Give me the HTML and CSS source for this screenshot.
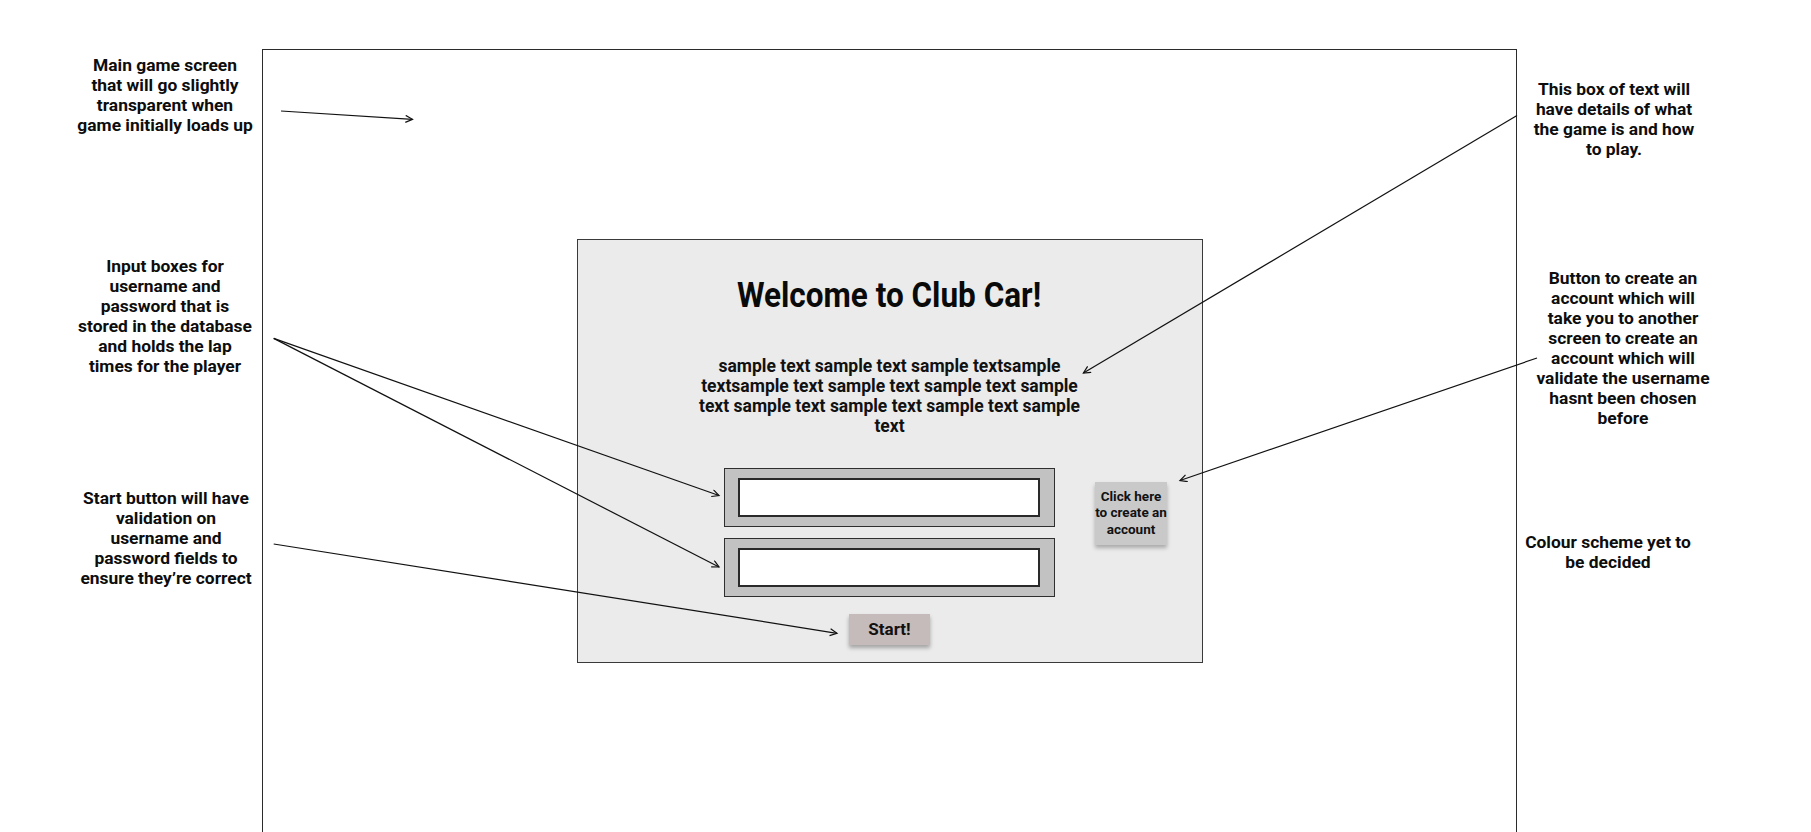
FILE: index.html
```html
<!DOCTYPE html>
<html lang="en">
<head>
<meta charset="utf-8">
<title>Club Car wireframe</title>
<link rel="stylesheet" href="styles.css">
</head>
<body>
<div class="page">
  <aside class="notes notes-left">
    <p class="note note-l1">Main game screen<br>that will go slightly<br>transparent when<br>game initially loads up</p>
    <p class="note note-l2">Input boxes for<br>username and<br>password that is<br>stored in the database<br>and holds the lap<br>times for the player</p>
    <p class="note note-l3">Start button will have<br>validation on<br>username and<br>password fields to<br>ensure they’re correct</p>
  </aside>

  <main class="frame">
    <section class="dialog">
      <h1 class="title">Welcome to Club Car!</h1>
      <p class="intro">sample text sample text sample textsample textsample text sample text sample text sample text sample text sample text sample text sample text</p>
      <div class="form-row">
        <div class="fields">
          <div class="field"><div class="field-input"></div></div>
          <div class="field"><div class="field-input"></div></div>
          <button class="start-btn" type="button">Start!</button>
        </div>
        <button class="create-btn" type="button">Click here<br>to create an<br>account</button>
      </div>
    </section>
  </main>

  <aside class="notes notes-right">
    <p class="note note-r1">This box of text will<br>have details of what<br>the game is and how<br>to play.</p>
    <p class="note note-r2">Button to create an<br>account which will<br>take you to another<br>screen to create an<br>account which will<br>validate the username<br>hasnt been chosen<br>before</p>
    <p class="note note-r3">Colour scheme yet to<br>be decided</p>
  </aside>

  <svg class="arrows" width="1811" height="832" viewBox="0 0 1811 832">
    <defs>
      <marker id="head" markerUnits="userSpaceOnUse" markerWidth="12" markerHeight="12" refX="7.5" refY="4" orient="auto">
        <path d="M0.5,0.5 L7.5,4 L0.5,7.5" fill="none" stroke="#111" stroke-width="1.2"/>
      </marker>
    </defs>
    <g fill="none" stroke="#111" stroke-width="1.2" marker-end="url(#head)">
      <path d="M281 111 L412.5 119.3"/>
      <path d="M1517 115.5 L1083.4 373"/>
      <path d="M1537 358 L1180 480.5"/>
      <path d="M273.7 338.4 L719 495.5"/>
      <path d="M273.7 338.4 L719 567"/>
      <path d="M273.7 544 L837 633.3"/>
    </g>
  </svg>
</div>
</body>
</html>
```

FILE: styles.css
```css
* {
  box-sizing: border-box;
}

html,
body {
  margin: 0;
  padding: 0;
  background: #ffffff;
}

body {
  width: 1811px;
  height: 832px;
  overflow: hidden;
  font-family: Roboto, "Liberation Sans", Arial, sans-serif;
  color: #111;
}

.page {
  position: relative;
  display: flex;
  width: 1811px;
  height: 832px;
}

.notes {
  display: flex;
  flex-direction: column;
  flex: none;
}

.notes-left {
  width: 262px;
}

.notes-right {
  width: 294px;
}

.note {
  margin: 0;
  width: 210px;
  font-size: 17.4px;
  line-height: 20px;
  font-weight: 700;
  text-align: center;
  white-space: nowrap;
  color: #0d0d0d;
}

.note-l1 { margin-top: 55px; margin-left: 60px; }
.note-l2 { margin-top: 121px; margin-left: 60px; }
.note-l3 { margin-top: 112px; margin-left: 61px; }

.note-r1 { margin-top: 79px; margin-left: -8px; }
.note-r2 { margin-top: 109px; margin-left: 1px; }
.note-r3 { margin-top: 104px; margin-left: -14px; }

.frame {
  flex: none;
  width: 1255px;
  height: 820px;
  margin-top: 49px;
  border: 1.5px solid #2b2b2b;
  border-bottom: none;
  display: flex;
  flex-direction: column;
  align-items: center;
}

.dialog {
  width: 626px;
  height: 424px;
  margin-top: 189px;
  background: #ebebeb;
  border: 1px solid #3a3a3a;
  display: flex;
  flex-direction: column;
  align-items: center;
  padding-top: 36px;
}

.title {
  margin: 0;
  font-size: 35px;
  line-height: 40px;
  font-weight: 700;
  color: #0a0a0a;
  transform: scaleX(0.9);
}

.intro {
  margin: 40px 0 0;
  width: 400px;
  font-size: 17.5px;
  line-height: 20px;
  font-weight: 700;
  text-align: center;
  color: #111;
}

.form-row {
  margin-top: 32px;
  width: 100%;
  display: grid;
  grid-template-columns: 1fr auto 1fr;
  align-items: start;
}

.fields {
  grid-column: 2;
  display: flex;
  flex-direction: column;
  align-items: center;
  gap: 11px;
}

.field {
  width: 331px;
  height: 59px;
  background: #c2c2c2;
  border: 1px solid #2f2f2f;
  padding: 9px 14px 9px 13px;
}

.field-input {
  width: 100%;
  height: 100%;
  background: #ffffff;
  border: 2px solid #2a2a2a;
}

.start-btn {
  margin-top: 6px;
  width: 81px;
  height: 31px;
  padding: 0 0 2px;
  border: none;
  background: #c6bbbb;
  box-shadow: 0 3px 4px rgba(0, 0, 0, 0.3);
  font-family: Roboto, "Liberation Sans", Arial, sans-serif;
  font-size: 17px;
  font-weight: 700;
  color: #111;
}

.create-btn {
  grid-column: 3;
  justify-self: start;
  margin-top: 14px;
  margin-left: 40px;
  width: 72px;
  height: 63px;
  padding: 6px 0 0;
  border: none;
  background: #c9c9c9;
  box-shadow: 0 3px 4px rgba(0, 0, 0, 0.28);
  font-family: Roboto, "Liberation Sans", Arial, sans-serif;
  font-size: 13.5px;
  line-height: 16.3px;
  font-weight: 700;
  color: #111;
  display: flex;
  flex-direction: column;
  align-items: center;
  justify-content: flex-start;
  white-space: nowrap;
}

.arrows {
  position: absolute;
  top: 0;
  left: 0;
  pointer-events: none;
}
```
